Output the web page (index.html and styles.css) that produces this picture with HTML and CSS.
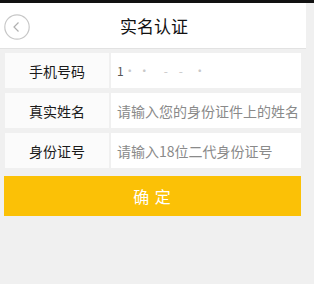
FILE: index.html
```html
<!DOCTYPE html>
<html>
<head>
<meta charset="utf-8">
<link rel="stylesheet" href="styles.css">
</head>
<body>
<div class="status"></div>
<header class="topbar">
  <div class="back">
    <svg width="26" height="26" viewBox="0 0 26 26"><circle cx="13" cy="13" r="12.2" fill="none" stroke="#c8c8c8" stroke-width="1.2"/><path d="M14.5 8.5 L10 13 L14.5 17.5" fill="none" stroke="#b0b0b0" stroke-width="1.2"/></svg>
  </div>
  <h1 class="title">实名认证</h1>
</header>
<main class="form">
  <div class="row">
    <div class="label">手机号码</div>
    <div class="value phone">1<span class="blur">· ·&nbsp;&nbsp;&nbsp;&nbsp;&nbsp;-&nbsp;&nbsp;&nbsp;&nbsp;-&nbsp;&nbsp;&nbsp;&nbsp;·</span></div>
  </div>
  <div class="row">
    <div class="label">真实姓名</div>
    <div class="value">请输入您的身份证件上的姓名</div>
  </div>
  <div class="row">
    <div class="label">身份证号</div>
    <div class="value">请输入18位二代身份证号</div>
  </div>
  <button class="submit">确 定</button>
</main>
</body>
</html>
```
FILE: styles.css
```css
html, body {
  margin: 0;
  padding: 0;
  background: #f0f0f0;
  font-family: "Noto Sans CJK SC", "Noto Sans", sans-serif;
  width: 314px;
  height: 284px;
  overflow: hidden;
}
.status {
  height: 3px;
  background: #111;
}
.topbar {
  height: 45px;
  background: #fff;
  border-bottom: 1px solid #e2e2e2;
  display: flex;
  align-items: center;
  position: relative;
  width: 306px;
}
.back {
  width: 26px;
  height: 26px;
  margin-left: 4px;
  margin-top: 2px;
}
.back svg { display: block; }
.title {
  position: absolute;
  left: 0;
  right: 0;
  top: 0;
  margin: 0;
  text-align: center;
  font-size: 17px;
  font-weight: normal;
  color: #111;
  line-height: 46px;
  padding-left: 2px;
}
.form {
  padding: 4px 0 0 4px;
  width: 297px;
  display: flex;
  flex-direction: column;
  gap: 5px;
}
.row {
  display: flex;
  gap: 2px;
  height: 35px;
}
.label {
  width: 104px;
  margin-left: 1px;
  background: #fbfbfb;
  display: flex;
  align-items: center;
  justify-content: center;
  font-size: 14px;
  color: #1a1a1a;
}
.value {
  flex: 1;
  background: #fff;
  display: flex;
  align-items: center;
  padding-left: 6px;
  font-size: 14px;
  color: #8a8a8a;
  white-space: nowrap;
  overflow: hidden;
}
.phone {
  color: #555;
  font-size: 12px;
}
.blur { color: #c8c8c8; }
.submit {
  margin-top: 3px;
  height: 40px;
  border: none;
  background: #fbc106;
  color: #fff;
  font-family: inherit;
  font-size: 16px;
  letter-spacing: 1px;
  padding: 0;
}
```
